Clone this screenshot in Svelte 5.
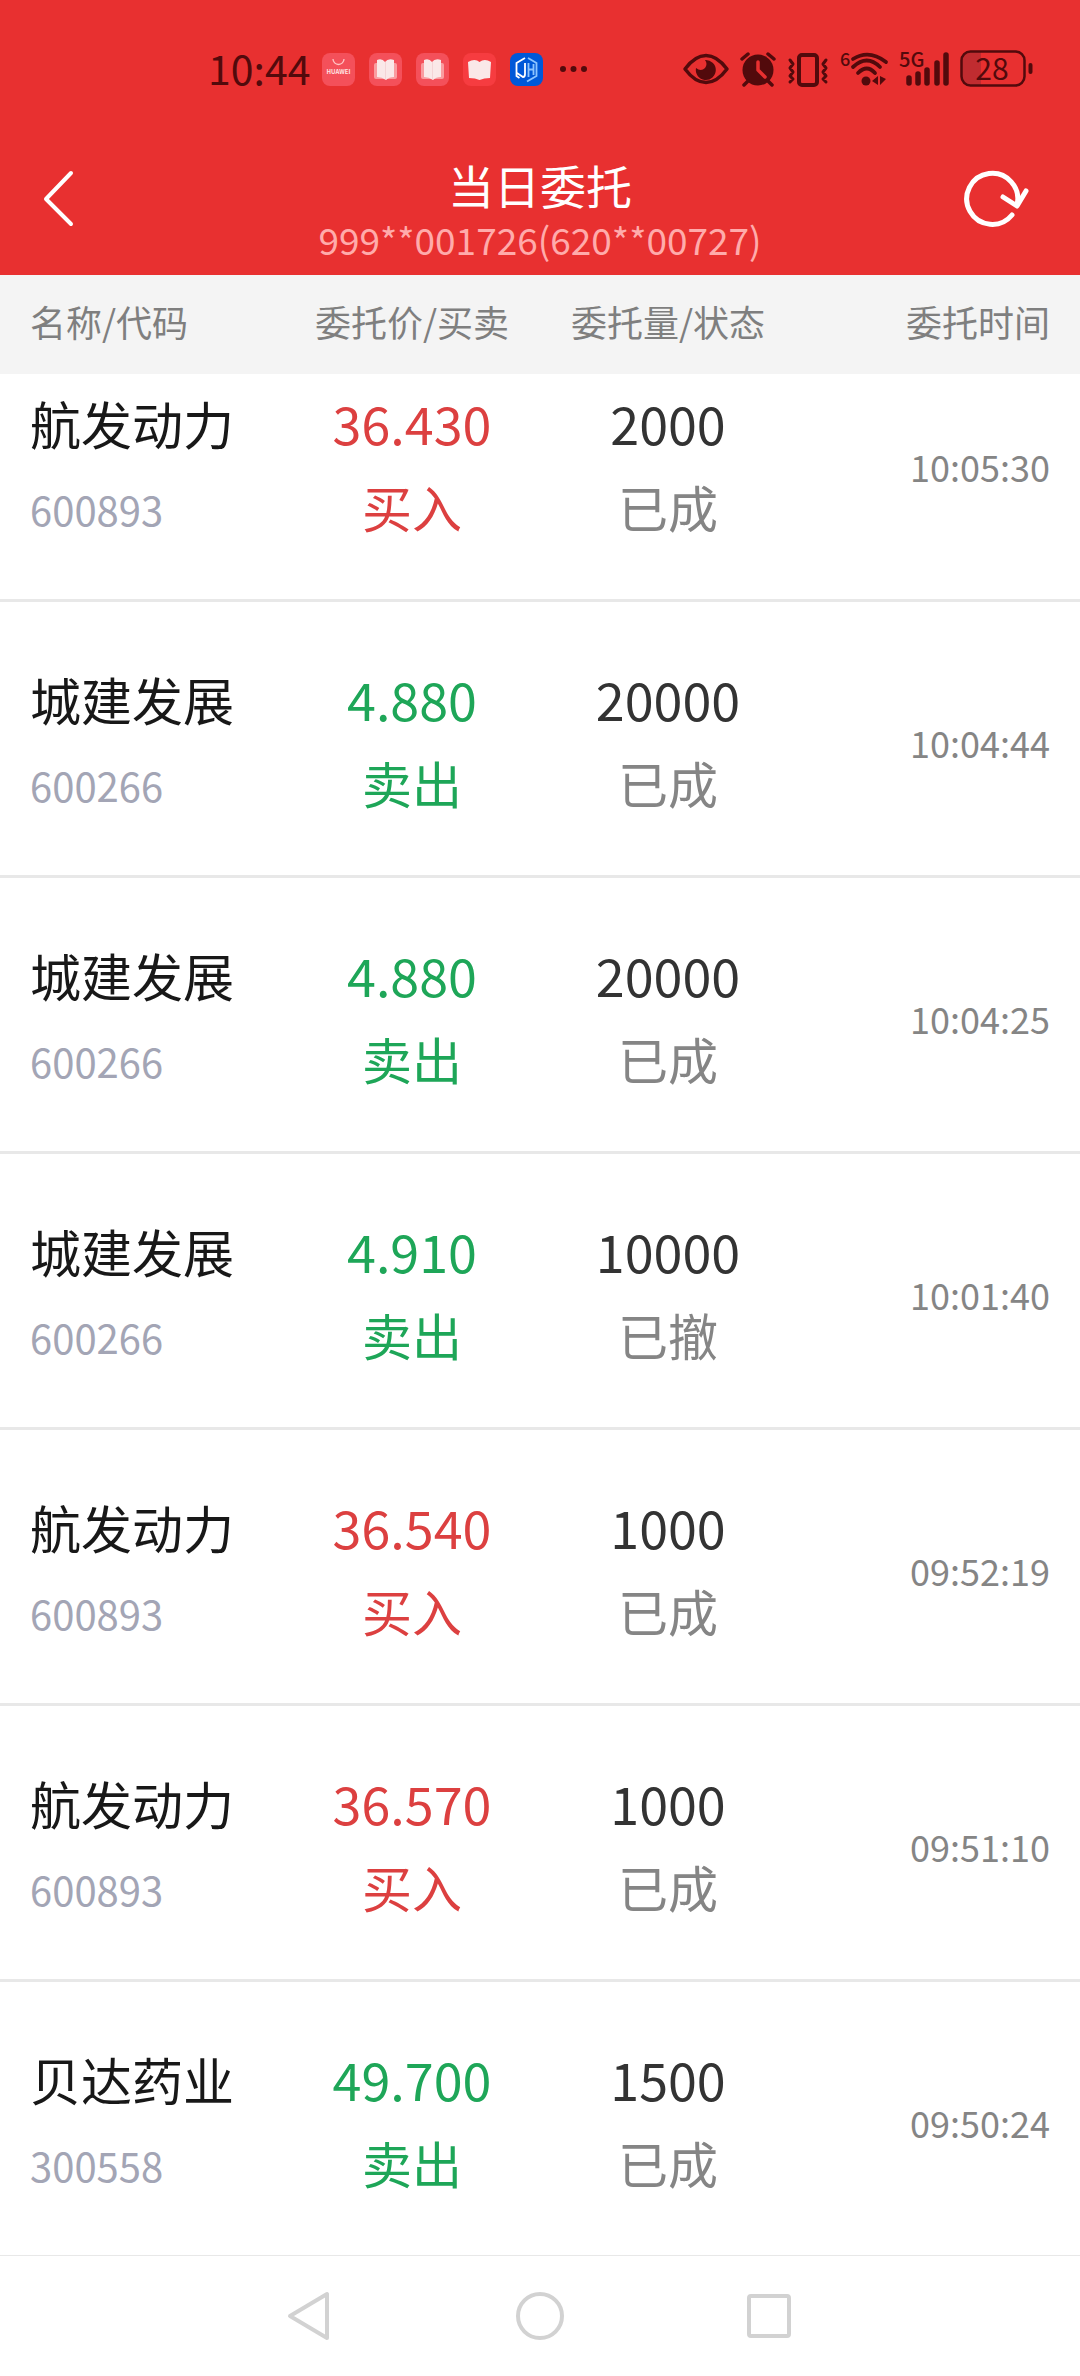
<script>
  const account = "999**001726(620**00727)";

  const orders = [
    { name: "航发动力", code: "600893", price: "36.430", side: "buy", amount: 2000, status: "已成", time: "10:05:30" },
    { name: "城建发展", code: "600266", price: "4.880", side: "sell", amount: 20000, status: "已成", time: "10:04:44" },
    { name: "城建发展", code: "600266", price: "4.880", side: "sell", amount: 20000, status: "已成", time: "10:04:25" },
    { name: "城建发展", code: "600266", price: "4.910", side: "sell", amount: 10000, status: "已撤", time: "10:01:40" },
    { name: "航发动力", code: "600893", price: "36.540", side: "buy", amount: 1000, status: "已成", time: "09:52:19" },
    { name: "航发动力", code: "600893", price: "36.570", side: "buy", amount: 1000, status: "已成", time: "09:51:10" },
    { name: "贝达药业", code: "300558", price: "49.700", side: "sell", amount: 1500, status: "已成", time: "09:50:24" },
  ];

  const sideText = { buy: "买入", sell: "卖出" };
</script>

<style>
  :global(body) {
    background: #fff;
    font-family: "Noto Sans CJK SC", "Noto Sans", sans-serif;
  }

  button {
    background: none;
    border: 0;
    cursor: pointer;
    padding: 0;
  }

  svg {
    display: block;
    overflow: visible;
  }

  .top {
    background: #e83030;
  }

  .status {
    align-items: center;
    box-sizing: border-box;
    color: #520a0c;
    display: flex;
    height: 123px;
    justify-content: space-between;
    padding: 15px 47px 0 208px;
  }

  .notices {
    align-items: center;
    display: flex;
    gap: 14px;
  }

  .clock {
    font-size: 41px;
    line-height: 48px;
    padding-bottom: 5px;
    width: 100px;
  }

  .system {
    align-items: center;
    display: flex;
    gap: 11px;
  }

  .bar {
    align-items: center;
    color: #fff;
    display: grid;
    grid-template-columns: 90px 1fr 90px;
    height: 152px;
    padding: 0 30px;
  }

  .title {
    padding-top: 24px;
    text-align: center;
  }

  h1 {
    font-size: 46px;
    font-weight: 400;
    line-height: 56px;
    margin: 0;
  }

  .account {
    color: #ffabab;
    font-size: 37px;
    line-height: 54px;
    margin: 0;
  }

  table {
    border-collapse: separate;
    border-spacing: 0;
    table-layout: fixed;
    width: 100%;
  }

  th {
    background: #f4f4f4;
    box-sizing: border-box;
    color: #7f7f7f;
    font-size: 36px;
    font-weight: 400;
    height: 99px;
    line-height: 54px;
    padding: 0 0 8px;
    white-space: nowrap;
    width: 256px;
  }

  th:first-child,
  th:last-child {
    width: auto;
  }

  td {
    border-bottom: 3px solid #e8e8e8;
    line-height: 86px;
    padding: 54px 0 47px;
    text-align: center;
    vertical-align: top;
  }

  th:first-child,
  td:first-child {
    padding-left: 30px;
    text-align: left;
  }

  th:last-child,
  td:last-child {
    padding-right: 30px;
    text-align: right;
  }

  /* the list is scrolled a little under its heading */
  tr:first-child td {
    padding-top: 6px;
  }

  tr:last-child td {
    border-bottom: 0;
  }

  .name {
    color: #181818;
    font-size: 51px;
  }

  .code {
    color: #a3a5b5;
    font-size: 40px;
  }

  .number {
    font-size: 52px;
  }

  .word {
    font-size: 50px;
    line-height: 80px;
  }

  .amount {
    color: #333;
  }

  .state {
    color: #858585;
  }

  .time {
    color: #858585;
    font-size: 36px;
    vertical-align: middle;
  }

  .buy {
    color: #dc4040;
  }

  .sell {
    color: #1ea658;
  }

  nav {
    border-top: 1px solid #e8e8e8;
    display: flex;
    height: 120px;
    justify-content: center;
  }

  nav button {
    align-items: center;
    display: flex;
    justify-content: center;
    width: 230px;
  }
</style>

{#snippet book()}
  <svg width="33" height="33" viewBox="0 0 33 33">
    <rect width="33" height="33" rx="8" fill="#f4505a" />
    <rect x="5" y="10" width="23" height="16" rx="2" fill="#fa9ca0" />
    <path d="M8 7q5-2 8 2q3-4 9-2v17q-5 0-8 3q-4-3-9-3z" fill="#fae8e8" />
    <path d="M16.5 9v17" stroke="#f4d4d6" />
  </svg>
{/snippet}

<div class="top">
  <div class="status">
    <div class="notices">
      <div class="clock">10:44</div>
      <svg width="33" height="33" viewBox="0 0 33 33">
        <rect width="33" height="33" rx="8" fill="#f4505a" />
        <path d="M11 6a5.5 5.5 0 0 0 11 0" fill="none" stroke="#ffc4c4" stroke-width="1.3" />
        <text x="16.5" y="21" text-anchor="middle" font-size="6" font-weight="700" fill="#ffe4e4">HUAWEI</text>
      </svg>
      {@render book()}
      {@render book()}
      <svg width="33" height="33" viewBox="0 0 33 33">
        <rect width="33" height="33" rx="8" fill="#f63c40" />
        <path d="M5 9q7-4 11.5 0q5-4 11.5 0l-1 16q-6 0-10.500 2q-4-2-10.500-2z" fill="#fae8e8" />
      </svg>
      <svg width="33" height="33" viewBox="0 0 33 33">
        <rect width="33" height="33" rx="8" fill="#0058d8" />
        <g fill="none" stroke-width="1.8">
          <path d="M15 5L6.500 10v13l3 2M7 20l6 4q2 0 2-3V10" stroke="#fff" />
          <path d="M18 5l8.500 5v13L17 28.500M18.500 10v14M23.500 11v11M18.500 16.500h5" stroke="#8cc4ff" />
        </g>
      </svg>
      <svg width="33" height="33" viewBox="0 0 33 33" fill="currentColor">
        <circle cx="6" cy="16" r="3" />
        <circle cx="16.5" cy="16" r="3" />
        <circle cx="27" cy="16" r="3" />
      </svg>
    </div>

    <div class="system">
      <svg width="46" height="40" viewBox="0 0 46 40">
        <path d="M2 20Q12 6.500 23 6.500T44 20Q34 33.500 23 33.500T2 20z" fill="none" stroke="currentColor" stroke-width="3.5" stroke-linejoin="round" />
        <path d="M22 11a10 10 0 1 1-9 8q5 4 9 0q3-4 0-8z" fill="currentColor" />
      </svg>
      <svg width="36" height="40" viewBox="0 0 36 40">
        <circle cx="18" cy="21" r="15.5" fill="currentColor" />
        <path d="M2 10l6-5M34 10l-6-5M8 32l-4 4M28 32l4 4" stroke="currentColor" stroke-width="3.5" stroke-linecap="round" />
        <path d="M18 13v8l7 7" fill="none" stroke="#e83030" stroke-width="3.5" stroke-linecap="round" stroke-linejoin="round" />
      </svg>
      <svg width="42" height="40" viewBox="0 0 42 40" fill="none" stroke="currentColor" stroke-linejoin="round" stroke-linecap="round">
        <rect x="12" y="6" width="18" height="30" rx="3" stroke-width="4" />
        <path d="M3 11l3 4-3 4 3 4-3 4 3 3-3 3M39 11l-3 4 3 4-3 4 3 4-3 3 3 3" stroke-width="3" />
      </svg>
      <svg width="48" height="40" viewBox="0 0 48 40">
        <text x="0" y="17" font-size="18" font-weight="500" fill="currentColor">6</text>
        <path d="M13 10Q29 0 46 13M13 18Q27 5 40 18M18 24Q27 15 35 24" fill="none" stroke="currentColor" stroke-width="3.8" stroke-linecap="round" />
        <circle cx="26" cy="32" r="4.5" fill="currentColor" />
        <path d="M32 32l6-5v9zM40 27v9l6-6z" fill="currentColor" />
      </svg>
      <svg width="50" height="40" viewBox="0 0 50 40">
        <text x="0" y="18" font-size="20" font-weight="500" fill="currentColor">5G</text>
        <path d="M10 29v5M19 25v9M28 21v13M38 14v20M47 6v28" stroke="currentColor" stroke-width="5.5" stroke-linecap="round" />
      </svg>
      <svg width="73" height="40" viewBox="0 0 73 40">
        <path d="M9 3h12v33H9q-7 0-7-7V10q0-7 7-7z" fill="#c02c30" />
        <rect x="1.5" y="2.5" width="63" height="34" rx="9" fill="none" stroke="currentColor" stroke-width="2.5" />
        <path d="M70.5 16v7" stroke="currentColor" stroke-width="4" stroke-linecap="round" />
        <text x="32" y="31" text-anchor="middle" font-size="30" fill="currentColor">28</text>
      </svg>
    </div>
  </div>

  <header class="bar">
    <button aria-label="返回">
      <svg width="56" height="60" viewBox="0 0 56 60" fill="none" stroke="#fff" stroke-width="4" stroke-linecap="round" stroke-linejoin="round">
        <path d="M41 4L16 30l25 25" />
      </svg>
    </button>
    <div class="title">
      <h1>当日委托</h1>
      <p class="account">{account}</p>
    </div>
    <button aria-label="刷新">
      <svg width="90" height="60" viewBox="0 0 90 60" fill="none" stroke="#fff" stroke-width="5" stroke-linecap="round" stroke-linejoin="round">
        <path d="M52 46A25.500 25.500 0 1 1 57 36" />
        <path d="M43 28l14 9 9-15" />
      </svg>
    </button>
  </header>
</div>

<table>
  <thead>
    <tr>
      <th>名称/代码</th>
      <th>委托价/买卖</th>
      <th>委托量/状态</th>
      <th>委托时间</th>
    </tr>
  </thead>
  <tbody>
    {#each orders as order}
      <tr>
        <td>
          <div class="name">{order.name}</div>
          <div class="code">{order.code}</div>
        </td>
        <td class={order.side}>
          <div class="number">{order.price}</div>
          <div class="word">{sideText[order.side]}</div>
        </td>
        <td>
          <div class="number amount">{order.amount}</div>
          <div class="word state">{order.status}</div>
        </td>
        <td class="time">{order.time}</td>
      </tr>
    {/each}
  </tbody>
</table>

<nav>
  <button aria-label="后退">
    <svg width="50" height="50" viewBox="0 0 50 50" fill="none" stroke="#d2d2d2" stroke-width="4" stroke-linejoin="round">
      <path d="M5 25L42 3v44z" />
    </svg>
  </button>
  <button aria-label="主页">
    <svg width="50" height="50" viewBox="0 0 50 50" fill="none" stroke="#d2d2d2" stroke-width="4">
      <circle cx="25" cy="25" r="22" />
    </svg>
  </button>
  <button aria-label="最近任务">
    <svg width="50" height="50" viewBox="0 0 50 50" fill="none" stroke="#d2d2d2" stroke-width="4">
      <rect x="4" y="5" width="40" height="40" rx="2" />
    </svg>
  </button>
</nav>
